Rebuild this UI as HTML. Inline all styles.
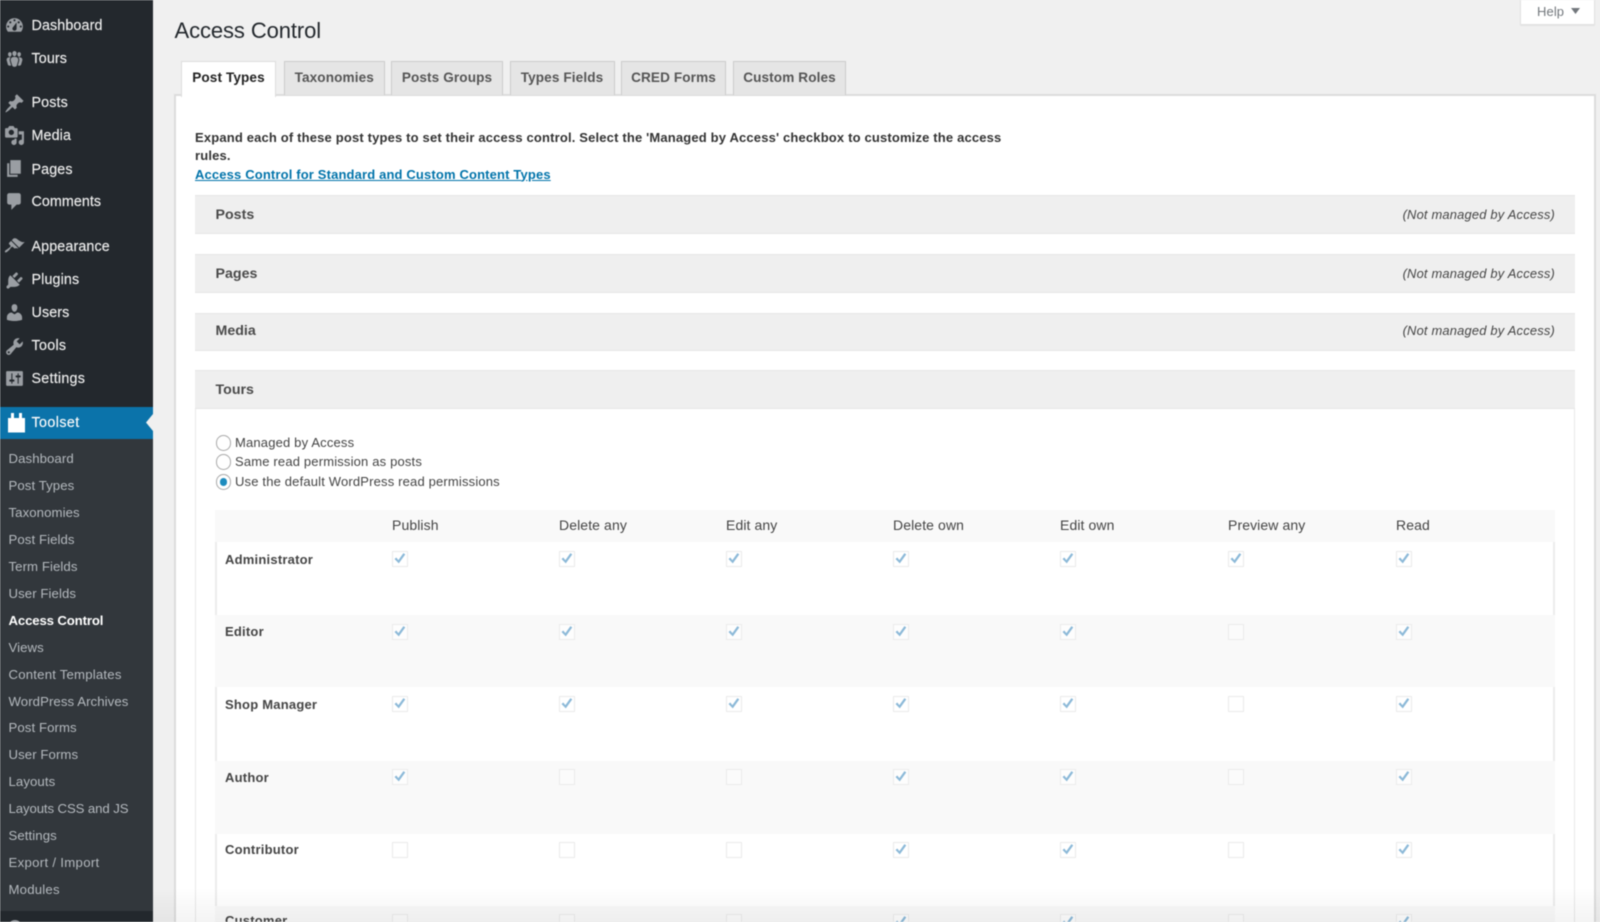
<!DOCTYPE html>
<html lang="en"><head><meta charset="utf-8"><title>Access Control</title>
<style>
*{box-sizing:border-box}
html,body{margin:0;padding:0;width:1600px;height:922px;overflow:hidden;background:#f0f0f0;font-family:"Liberation Sans",Arial,sans-serif;color:#444}
.a{position:absolute}
.t{position:absolute;white-space:nowrap;line-height:20px}
#wrap{position:relative;width:1600px;height:922px;overflow:hidden;filter:blur(.4px)}
#side{left:0;top:0;width:153px;height:922px;background:#23282d}
#sub{left:0;top:439px;width:153px;height:472px;background:#32373c}
#cur{left:0;top:407px;width:153px;height:32px;background:#0b73aa}
.m{color:#eee;font-size:14.3px;left:31.5px;letter-spacing:.12px;margin-top:.8px;-webkit-text-stroke:.15px #eee}
.s{color:#b4b9be;font-size:13.2px;left:8.5px;letter-spacing:.08px;margin-top:.3px}
.i{position:absolute;left:4px;width:21px;height:21px;fill:#9a9ea3}
.tab{position:absolute;top:61px;height:33.5px;background:#e5e5e5;border:1px solid #ccc;border-bottom:none;font-size:13.6px;font-weight:bold;color:#555;text-align:center;line-height:31px;letter-spacing:.1px;white-space:nowrap}
.tab.on{background:#fff;color:#222;top:61px;height:36px;z-index:3;border-color:#ddd}
#box{left:174px;top:93.5px;width:1422px;height:840px;background:#fff;border:2px solid #dcdcdc}
.p{position:absolute;left:195px;width:1380px;background:#efefef;border:1px solid #e6e6e6;border-width:1px 0 1px 0}
.h{left:215.5px;font-size:14.2px;font-weight:bold;color:#4a4a4a;letter-spacing:.02px;margin-top:.7px}
.n{right:45px;font-size:12.9px;font-style:italic;color:#444;letter-spacing:.2px;position:absolute;white-space:nowrap;line-height:20px}
.b{font-size:13px;font-weight:bold;color:#333;letter-spacing:.165px}
.r{left:235px;font-size:13px;color:#444;letter-spacing:.17px}
.o{position:absolute;left:215.5px;width:15.5px;height:15.5px;border-radius:50%;background:#fff;border:1px solid #a9a9a9}
.row{position:absolute;left:215px;width:1340px;border-left:2px solid #ececec;border-right:2px solid #ececec}
.f9{background:#f9f9f9;border-color:#f9f9f9}
.w{background:#fff}
.th{top:515px;font-size:14px;color:#444;letter-spacing:.1px}
.l{left:225px;font-size:13px;font-weight:bold;color:#444;letter-spacing:.22px}
.c{position:absolute;width:16px;height:16px;overflow:visible}
.c1{left:392px}.c2{left:559px}.c3{left:726px}.c4{left:893px}.c5{left:1060px}.c6{left:1228px}.c7{left:1396px}
#fade{left:153px;top:888px;width:1447px;height:34px;background:linear-gradient(to bottom,rgba(0,0,0,0) 0%,rgba(0,0,0,.018) 40%,rgba(0,0,0,.045) 100%)}
</style></head><body>
<svg width="0" height="0" style="position:absolute"><defs>
<symbol id="y" viewBox="0 0 16 16"><rect x=".5" y=".5" width="15" height="15" fill="#fff" fill-opacity=".7" stroke="#ebebeb"/><path d="M2.500 8l1.800-1.500 2.100 2.600 5-7 1.900 1.300-6.500 9z" fill="#8cb9d8"/></symbol>
<symbol id="x" viewBox="0 0 16 16"><rect x=".5" y=".5" width="15" height="15" fill="#fff" fill-opacity=".4" stroke="#ebebeb"/></symbol>
</defs></svg>
<div id="wrap">

<div class="a" id="side"></div>
<div class="a" id="sub"></div>
<div class="a" id="cur"></div>
<svg class="a" style="left:146px;top:414px" width="7" height="17"><path d="M7 0v17L0 8.500z" fill="#f0f0f0"/></svg>

<svg class="i" style="top:15px" viewBox="0 0 20 20"><path d="M3.760 16h12.480c1.100-1.370 1.760-3.110 1.760-5 0-4.420-3.580-8-8-8s-8 3.580-8 8c0 1.890.660 3.630 1.760 5zM10 4c.550 0 1 .450 1 1s-.450 1-1 1-1-.450-1-1 .450-1 1-1zM6 6c.550 0 1 .450 1 1s-.450 1-1 1-1-.450-1-1 .450-1 1-1zm8 0c.550 0 1 .450 1 1s-.450 1-1 1-1-.450-1-1 .450-1 1-1zm-5.370 5.550L12 7v6c0 1.100-.900 2-2 2s-2-.900-2-2c0-.570.240-1.080.630-1.450zM4 10c.550 0 1 .450 1 1s-.450 1-1 1-1-.450-1-1 .450-1 1-1zm12 0c.550 0 1 .450 1 1s-.450 1-1 1-1-.450-1-1 .450-1 1-1z" fill-rule="evenodd"/></svg>
<div class="t m" style="top:15.500px">Dashboard</div>
<svg class="i" style="top:48px" viewBox="0 0 20 20"><path d="M8.030 4.460c-.290 1.280.550 3.460 1.970 3.460 1.410 0 2.250-2.180 1.960-3.460-.220-.980-1.080-1.630-1.960-1.630-.890 0-1.740.650-1.970 1.630zm-4.130.900c-.250 1.080.470 2.930 1.670 2.930s1.920-1.850 1.670-2.930c-.190-.830-.920-1.390-1.670-1.390s-1.480.560-1.670 1.390zm8.860 0c-.250 1.080.470 2.930 1.660 2.930 1.200 0 1.920-1.850 1.670-2.930-.190-.830-.920-1.390-1.670-1.390-.740 0-1.470.560-1.660 1.390zm-.590 11.430l1.250-4.300C14.200 10 12.710 8.470 10 8.470c-2.720 0-4.210 1.530-3.440 4.020l1.260 4.300C8.050 17.510 9 18 10 18c.980 0 1.940-.490 2.170-1.210zm-6.100-7.630c-.490.670-.960 1.830-.420 3.590l1.120 3.790c-.340.200-.770.310-1.200.310-.850 0-1.650-.410-1.850-1.030l-1.070-3.650c-.650-2.110.610-3.400 2.920-3.400.270 0 .540.020.790.060-.100.100-.200.220-.290.330zm8.350-.390c2.310 0 3.580 1.290 2.920 3.400l-1.070 3.650c-.200.620-1 1.030-1.850 1.030-.430 0-.860-.110-1.200-.310l1.110-3.770c.550-1.780.080-2.940-.420-3.610-.080-.110-.180-.230-.280-.330.250-.040.510-.060.790-.060z"/></svg>
<div class="t m" style="top:48px">Tours</div>
<svg class="i" style="top:93px" viewBox="0 0 20 20"><path d="M10.440 3.020l1.820-1.820 6.360 6.350-1.830 1.820c-1.050-.680-2.480-.570-3.410.360l-.750.750c-.920.930-1.040 2.350-.350 3.410l-1.830 1.820-2.410-2.410-2.800 2.790c-.420.420-3.380 2.710-3.800 2.290s1.860-3.390 2.280-3.810l2.790-2.790L4.100 9.360l1.830-1.820c1.050.690 2.480.570 3.400-.360l.750-.750c.930-.920 1.050-2.350.360-3.410z"/></svg>
<div class="t m" style="top:92.500px">Posts</div>
<svg class="i" style="top:125px" viewBox="0 0 20 20"><path d="M13 11V4c0-.550-.450-1-1-1h-1.670L9 1H5L3.670 3H2c-.550 0-1 .450-1 1v7c0 .550.450 1 1 1h10c.550 0 1-.450 1-1zM7 4.500c1.380 0 2.500 1.120 2.500 2.500S8.380 9.500 7 9.500 4.500 8.380 4.500 7 5.620 4.500 7 4.500zM14 6h5v10.500c0 1.380-1.120 2.500-2.500 2.500S14 17.880 14 16.500s1.120-2.500 2.500-2.500c.170 0 .340.020.500.050V9h-3V6zm-4 8.050V13h2v3.500c0 1.380-1.120 2.500-2.500 2.500S7 17.880 7 16.500 8.120 14 9.500 14c.170 0 .340.020.500.050z"/></svg>
<div class="t m" style="top:125px">Media</div>
<svg class="i" style="top:158px" viewBox="0 0 20 20"><path d="M6 15V2h10v13H6zm-1 1h8v2H3V5h2v11z"/></svg>
<div class="t m" style="top:159px">Pages</div>
<svg class="i" style="top:191px" viewBox="0 0 20 20"><path d="M5 2h9c1.100 0 2 .900 2 2v7c0 1.100-.900 2-2 2h-2l-5 5v-5H5c-1.100 0-2-.900-2-2V4c0-1.100.900-2 2-2z"/></svg>
<div class="t m" style="top:191px;letter-spacing:.06px">Comments</div>
<svg class="i" style="top:236px" viewBox="0 0 20 20"><path d="M14.480 11.060L7.410 3.990l1.500-1.500c.500-.560 2.300-.470 3.510.320 1.210.800 1.430 1.280 2.910 2.100 1.180.640 2.450 1.260 4.450.850zm-.710.710L6.700 4.700 4.930 6.470c-.390.390-.390 1.020 0 1.410l1.060 1.060c.390.390.390 1.030 0 1.420-.600.600-1.430 1.110-2.210 1.690-.350.260-.700.530-1.010.840C1.430 13.230.400 14.850 1.020 15.470c.620.620 2.240-.400 3.580-1.750.310-.310.580-.660.850-1.010.580-.780 1.080-1.610 1.690-2.210.390-.390 1.020-.390 1.410 0l1.060 1.060c.390.390 1.020.390 1.410 0z"/></svg>
<div class="t m" style="top:236px">Appearance</div>
<svg class="i" style="top:270px" viewBox="0 0 20 20"><path d="M13.110 4.360L9.870 7.600 8 5.730l3.240-3.240c.350-.340 1.050-.200 1.560.320.520.510.660 1.210.310 1.550zm-8 1.770l.910-1.120 9.010 9.010-1.190.84c-.710.710-2.630 1.160-3.820 1.160H6.140L4.900 17.260c-.590.590-1.540.590-2.120 0-.590-.580-.590-1.530 0-2.120l1.240-1.240v-3.880c0-1.130.400-3.190 1.090-3.890zm7.260 3.970l3.240-3.240c.340-.350 1.040-.210 1.550.310.520.510.660 1.210.31 1.550l-3.240 3.250z"/></svg>
<div class="t m" style="top:269.500px">Plugins</div>
<svg class="i" style="top:302px" viewBox="0 0 20 20"><path d="M10 9.250c-2.270 0-2.730-3.440-2.730-3.440C7 4.020 7.820 2 9.970 2c2.160 0 2.980 2.020 2.710 3.810 0 0-.410 3.440-2.680 3.440zm0 2.570L12.720 10c2.390 0 4.520 2.330 4.520 4.530v2.490s-3.650 1.130-7.240 1.130c-3.650 0-7.240-1.130-7.240-1.130v-2.490c0-2.250 1.940-4.480 4.470-4.480z"/></svg>
<div class="t m" style="top:302px">Users</div>
<svg class="i" style="top:336px" viewBox="0 0 20 20"><path d="M16.680 9.770c-1.340 1.340-3.300 1.670-4.950.990l-5.410 6.520c-.990.990-2.590.990-3.580 0s-.990-2.590 0-3.570l6.520-5.420c-.680-1.650-.350-3.610.990-4.950 1.280-1.280 3.120-1.620 4.720-1.060l-2.890 2.890 2.820 2.820 2.860-2.870c.530 1.580.180 3.390-1.080 4.650zM3.810 16.210c.400.390 1.040.390 1.430 0 .400-.400.400-1.040 0-1.430-.390-.400-1.030-.400-1.430 0-.390.390-.390 1.030 0 1.430z"/></svg>
<div class="t m" style="top:335.500px;letter-spacing:.3px">Tools</div>
<svg class="i" style="top:368px" viewBox="0 0 20 20"><path d="M18 16V4c0-.550-.450-1-1-1H3c-.550 0-1 .450-1 1v12c0 .550.450 1 1 1h14c.550 0 1-.450 1-1zM8 11h1c.550 0 1 .450 1 1s-.450 1-1 1H8v1.500c0 .280-.220.500-.500.500s-.500-.220-.500-.500V13H6c-.550 0-1-.450-1-1s.450-1 1-1h1V5.500c0-.280.220-.500.500-.500s.500.220.500.500V11zm5-2h-1c-.550 0-1-.450-1-1s.450-1 1-1h1V5.500c0-.280.220-.500.500-.500s.500.220.500.500V7h1c.550 0 1 .450 1 1s-.450 1-1 1h-1v5.500c0 .280-.220.500-.500.500s-.500-.220-.500-.500V9z"/></svg>
<div class="t m" style="top:368px;letter-spacing:.25px">Settings</div>

<svg class="a" style="left:7px;top:412px" width="19" height="21" viewBox="0 0 19 21"><path d="M1 6h3V1h3v5h5V1h3v5h3v14.500H1z" fill="#fff"/></svg>
<div class="t m" style="top:412.500px;color:#fff;letter-spacing:.4px">Toolset</div>

<div class="t s" style="top:449px">Dashboard</div>
<div class="t s" style="top:476px">Post Types</div>
<div class="t s" style="top:503px">Taxonomies</div>
<div class="t s" style="top:530px">Post Fields</div>
<div class="t s" style="top:557px">Term Fields</div>
<div class="t s" style="top:583.500px">User Fields</div>
<div class="t s" style="top:610.500px;color:#fff;font-weight:bold;letter-spacing:-.14px">Access Control</div>
<div class="t s" style="top:637.500px">Views</div>
<div class="t s" style="top:664.500px;letter-spacing:.2px">Content Templates</div>
<div class="t s" style="top:692px">WordPress Archives</div>
<div class="t s" style="top:718px">Post Forms</div>
<div class="t s" style="top:745px">User Forms</div>
<div class="t s" style="top:772px">Layouts</div>
<div class="t s" style="top:799px;letter-spacing:-.1px">Layouts CSS and JS</div>
<div class="t s" style="top:825.500px">Settings</div>
<div class="t s" style="top:852.500px;letter-spacing:.3px">Export / Import</div>
<div class="t s" style="top:879.500px;letter-spacing:.2px">Modules</div>
<div class="a" style="left:8px;top:920px;width:14px;height:14px;border-radius:50%;background:#9a9ea3"></div>

<div class="t" style="left:174.500px;top:19px;font-size:22px;line-height:24px;color:#23282d;letter-spacing:-.1px">Access Control</div>

<div class="a" style="left:1519.500px;top:-2px;width:75.500px;height:27px;background:#fff;border:1px solid #e2e2e2;box-shadow:0 1px 1px rgba(0,0,0,.05)"></div>
<div class="t" style="left:1537px;top:2px;font-size:13px;color:#72777c;letter-spacing:.1px">Help</div>
<svg class="a" style="left:1571px;top:8px" width="9" height="6"><path d="M0 0h9L4.500 6z" fill="#72777c"/></svg>

<div class="a" id="box"></div>
<div class="tab on" style="left:181px;width:95px">Post Types</div>
<div class="tab" style="left:283.500px;width:101.500px">Taxonomies</div>
<div class="tab" style="left:391px;width:112px">Posts Groups</div>
<div class="tab" style="left:509.500px;width:105px">Types Fields</div>
<div class="tab" style="left:621px;width:105px">CRED Forms</div>
<div class="tab" style="left:733px;width:113px">Custom Roles</div>

<div class="t b" style="left:195px;top:127.500px">Expand each of these post types to set their access control. Select the 'Managed by Access' checkbox to customize the access</div>
<div class="t b" style="left:195px;top:146px">rules.</div>
<div class="t b" style="left:195px;top:164.500px;color:#0073aa;text-decoration:underline;letter-spacing:.15px">Access Control for Standard and Custom Content Types</div>

<div class="p" style="top:195px;height:39px"></div>
<div class="t h" style="top:204px">Posts</div><div class="n" style="top:205px">(Not managed by Access)</div>
<div class="p" style="top:254px;height:39px"></div>
<div class="t h" style="top:263px">Pages</div><div class="n" style="top:263.500px">(Not managed by Access)</div>
<div class="p" style="top:312.500px;height:38px"></div>
<div class="t h" style="top:320px">Media</div><div class="n" style="top:321px">(Not managed by Access)</div>
<div class="a" style="left:195px;top:370px;width:1380px;height:552px;background:#fff;border:1px solid #e8e8e8;border-bottom:none"></div>
<div class="p" style="top:370px;height:39px"></div>
<div class="t h" style="top:379px">Tours</div>

<div class="o" style="top:435px"></div>
<div class="t r" style="top:432.500px">Managed by Access</div>
<div class="o" style="top:454px"></div>
<div class="t r" style="top:452px">Same read permission as posts</div>
<div class="o" style="top:474px"></div>
<div class="a" style="left:219.500px;top:478px;width:7.500px;height:7.500px;border-radius:50%;background:#1e8cbe"></div>
<div class="t r" style="top:471.500px">Use the default WordPress read permissions</div>

<div class="a" style="left:215px;top:510px;width:1340px;height:32px;background:#f9f9f9"></div>
<div class="t th" style="left:392px">Publish</div>
<div class="t th" style="left:559px">Delete any</div>
<div class="t th" style="left:726px">Edit any</div>
<div class="t th" style="left:893px">Delete own</div>
<div class="t th" style="left:1060px">Edit own</div>
<div class="t th" style="left:1228px">Preview any</div>
<div class="t th" style="left:1396px">Read</div>

<div class="row w" style="top:542px;height:73px"></div>
<div class="row f9" style="top:615px;height:72px"></div>
<div class="row w" style="top:687px;height:73.500px"></div>
<div class="row f9" style="top:760.500px;height:73.500px"></div>
<div class="row w" style="top:834px;height:72px"></div>
<div class="row f9" style="top:906px;height:16px"></div>

<div class="t l" style="top:549.500px">Administrator</div>
<div class="t l" style="top:622px">Editor</div>
<div class="t l" style="top:695px">Shop Manager</div>
<div class="t l" style="top:767.500px">Author</div>
<div class="t l" style="top:840px">Contributor</div>
<div class="t l" style="top:911px">Customer</div>

<svg class="c c1" style="top:551px"><use href="#y"/></svg><svg class="c c2" style="top:551px"><use href="#y"/></svg><svg class="c c3" style="top:551px"><use href="#y"/></svg><svg class="c c4" style="top:551px"><use href="#y"/></svg><svg class="c c5" style="top:551px"><use href="#y"/></svg><svg class="c c6" style="top:551px"><use href="#y"/></svg><svg class="c c7" style="top:551px"><use href="#y"/></svg>
<svg class="c c1" style="top:624px"><use href="#y"/></svg><svg class="c c2" style="top:624px"><use href="#y"/></svg><svg class="c c3" style="top:624px"><use href="#y"/></svg><svg class="c c4" style="top:624px"><use href="#y"/></svg><svg class="c c5" style="top:624px"><use href="#y"/></svg><svg class="c c6" style="top:624px"><use href="#x"/></svg><svg class="c c7" style="top:624px"><use href="#y"/></svg>
<svg class="c c1" style="top:696px"><use href="#y"/></svg><svg class="c c2" style="top:696px"><use href="#y"/></svg><svg class="c c3" style="top:696px"><use href="#y"/></svg><svg class="c c4" style="top:696px"><use href="#y"/></svg><svg class="c c5" style="top:696px"><use href="#y"/></svg><svg class="c c6" style="top:696px"><use href="#x"/></svg><svg class="c c7" style="top:696px"><use href="#y"/></svg>
<svg class="c c1" style="top:769px"><use href="#y"/></svg><svg class="c c2" style="top:769px"><use href="#x"/></svg><svg class="c c3" style="top:769px"><use href="#x"/></svg><svg class="c c4" style="top:769px"><use href="#y"/></svg><svg class="c c5" style="top:769px"><use href="#y"/></svg><svg class="c c6" style="top:769px"><use href="#x"/></svg><svg class="c c7" style="top:769px"><use href="#y"/></svg>
<svg class="c c1" style="top:842px"><use href="#x"/></svg><svg class="c c2" style="top:842px"><use href="#x"/></svg><svg class="c c3" style="top:842px"><use href="#x"/></svg><svg class="c c4" style="top:842px"><use href="#y"/></svg><svg class="c c5" style="top:842px"><use href="#y"/></svg><svg class="c c6" style="top:842px"><use href="#x"/></svg><svg class="c c7" style="top:842px"><use href="#y"/></svg>
<svg class="c c1" style="top:914px"><use href="#x"/></svg><svg class="c c2" style="top:914px"><use href="#x"/></svg><svg class="c c3" style="top:914px"><use href="#x"/></svg><svg class="c c4" style="top:914px"><use href="#y"/></svg><svg class="c c5" style="top:914px"><use href="#y"/></svg><svg class="c c6" style="top:914px"><use href="#x"/></svg><svg class="c c7" style="top:914px"><use href="#y"/></svg>

<div class="a" id="fade"></div>
</div>
</body></html>
